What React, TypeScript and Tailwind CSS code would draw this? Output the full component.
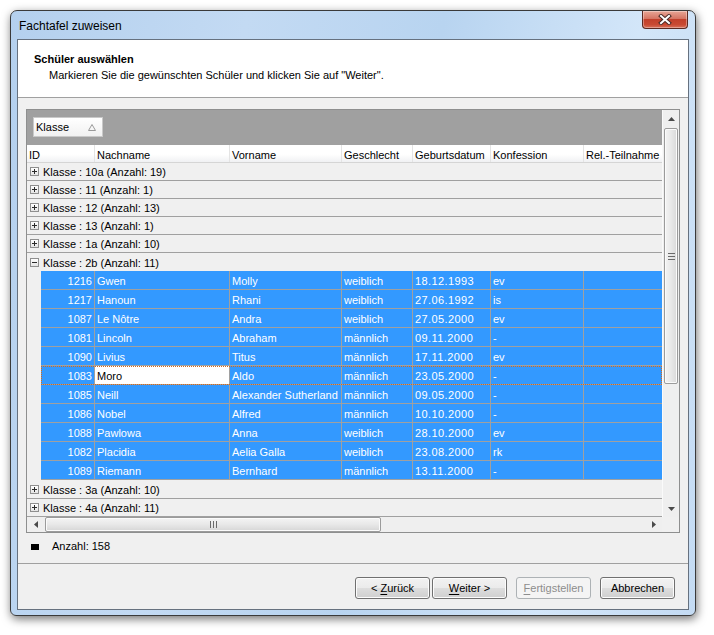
import React from "react";

type Row = [string, string, string, string, string, string];

const rows: Row[] = [
  ["1216", "Gwen", "Molly", "weiblich", "18.12.1993", "ev"],
  ["1217", "Hanoun", "Rhani", "weiblich", "27.06.1992", "is"],
  ["1087", "Le Nôtre", "Andra", "weiblich", "27.05.2000", "ev"],
  ["1081", "Lincoln", "Abraham", "männlich", "09.11.2000", "-"],
  ["1090", "Livius", "Titus", "männlich", "17.11.2000", "ev"],
  ["1083", "Moro", "Aldo", "männlich", "23.05.2000", "-"],
  ["1085", "Neill", "Alexander Sutherland", "männlich", "09.05.2000", "-"],
  ["1086", "Nobel", "Alfred", "männlich", "10.10.2000", "-"],
  ["1088", "Pawlowa", "Anna", "weiblich", "28.10.2000", "ev"],
  ["1082", "Placidia", "Aelia Galla", "weiblich", "23.08.2000", "rk"],
  ["1089", "Riemann", "Bernhard", "männlich", "13.11.2000", "-"],
];

const colW = ["w-[135px]", "w-[112px]", "w-[71px]", "w-[78px]", "w-[93px]", "w-[78px]"];
const headers = ["Nachname", "Vorname", "Geschlecht", "Geburtsdatum", "Konfession", "Rel.-Teilnahme"];

function PlusBox({ minus }: { minus?: boolean }) {
  return (
    <div className="w-[9px] h-[9px] border border-[#8f8f8f] bg-[linear-gradient(#ffffff,#e4e4e4)] flex items-center justify-center shrink-0">
      <svg width="5" height="5" viewBox="0 0 5 5">
        <rect x="0" y="2" width="5" height="1" fill="#2a2a2a" />
        {!minus && <rect x="2" y="0" width="1" height="5" fill="#2a2a2a" />}
      </svg>
    </div>
  );
}

function GroupRow({ label, minus, noBorder }: { label: string; minus?: boolean; noBorder?: boolean }) {
  return (
    <div
      className={
        noBorder
          ? "h-[18px] flex items-center pl-[3px] gap-[4px] bg-[#f0f0f0]"
          : "h-[18px] flex items-center pl-[3px] gap-[4px] bg-[#f0f0f0] border-b border-[#a0a0a0]"
      }
    >
      <PlusBox minus={minus} />
      <span className="leading-none pt-[2px]">Klasse : {label}</span>
    </div>
  );
}

function DataRow({ r, focused }: { r: Row; focused?: boolean }) {
  return (
    <div
      className={
        focused
          ? "flex h-[19px] border-b border-[#a0a0a0] bg-[#3399ff] text-white outline-1 outline-dotted outline-[#d2691e] -outline-offset-1"
          : "flex h-[19px] border-b border-[#a0a0a0] bg-[#3399ff] text-white"
      }
    >
      <div className="w-[54px] border-r border-[#a0a0a0] flex items-center justify-end pr-[2px] pt-[2px]">{r[0]}</div>
      {r.slice(1).map((v, i) => (
        <div
          key={i}
          className={
            (i === 0 && focused ? "bg-white text-black " : "") +
            (i === 3 ? "tracking-[0.4px] " : "") +
            colW[i] +
            (i < 5 ? " border-r border-[#a0a0a0]" : "") +
            " flex items-center pl-[2px] pt-[2px] whitespace-nowrap overflow-hidden"
          }
        >
          {v}
        </div>
      ))}
    </div>
  );
}

function Btn({ children, disabled }: { children: React.ReactNode; disabled?: boolean }) {
  return (
    <div
      className={
        disabled
          ? "w-[75px] h-[22px] rounded-[3px] border border-[#adb2b5] bg-[#f4f4f4] text-[#8d8d8d] flex items-center justify-center"
          : "w-[75px] h-[22px] rounded-[3px] border border-[#707070] bg-[linear-gradient(#f2f2f2,#ebebeb_48%,#dddddd_52%,#cfcfcf)] text-black flex items-center justify-center shadow-[inset_0_0_0_1px_#fcfcfc]"
      }
    >
      {children}
    </div>
  );
}

export default function App() {
  return (
    <div className="w-[714px] h-[635px] bg-white pt-[10px] pl-[10px] font-['Liberation_Sans',Arial,sans-serif] text-[11px] text-black">
      <div className="w-[686px] h-[606px] border border-[#3a3a3a] rounded-t-[7px] rounded-b-[6px] flex flex-col bg-[linear-gradient(100deg,#b4d0ee,#c3daf3_30%,#b8d4f0_55%,#d3e6f9_80%,#c4dbf3)] shadow-[1px_3px_10px_rgba(0,0,0,0.55)]">
        {/* title bar */}
        <div className="h-[28px] flex pl-[8px] pr-[7px]">
          <div className="self-center text-[12px] pt-[1px] text-black">Fachtafel zuweisen</div>
          <div className="ml-auto w-[46px] h-[18px] rounded-b-[4px] border border-t-0 border-[#5b2a22] bg-[linear-gradient(#e8a696,#d57563_45%,#c2402b_50%,#c94a33_80%,#d8705a)] flex items-center justify-center shadow-[inset_0_0_0_1px_rgba(255,255,255,0.35)]">
            <svg width="14" height="11" viewBox="0 0 14 11">
              <path d="M3 2 L11 9 M11 2 L3 9" stroke="#4a2a26" strokeWidth="4" strokeLinecap="square" />
              <path d="M3 2 L11 9 M11 2 L3 9" stroke="#ffffff" strokeWidth="2" strokeLinecap="square" />
            </svg>
          </div>
        </div>
        {/* client */}
        <div className="mx-[6px] h-[571px] border border-[#66717f] bg-[#f0f0f0] flex flex-col">
          <div className="h-[58px] bg-white border-b border-[#a0a0a0] flex flex-col pl-[16px] pt-[13px] shrink-0">
            <div className="font-bold leading-[13px]">Schüler auswählen</div>
            <div className="leading-[13px] mt-[3px] pl-[15px]">
              Markieren Sie die gewünschten Schüler und klicken Sie auf "Weiter".
            </div>
          </div>

          {/* grid */}
          <div className="mt-[11px] ml-[8px] w-[654px] h-[424px] border border-[#8e8f8f] flex flex-col shrink-0">
            <div className="flex h-[407px]">
              <div className="w-[635px] flex flex-col">
                <div className="h-[35px] bg-[#a0a0a0] pt-[7px] pl-[6px] shrink-0">
                  <div className="w-[70px] h-[20px] bg-[linear-gradient(#ffffff,#f1f1f1)] border border-[#c9c9c9] flex items-center pl-[2px] pr-[6px] pt-[1px]">
                    <span>Klasse</span>
                    <svg className="ml-auto" width="8" height="7" viewBox="0 0 8 7">
                      <polygon points="0.5,6.5 4,0.5 7.5,6.5" fill="none" stroke="#9a9a9a" strokeWidth="1" />
                    </svg>
                  </div>
                </div>
                <div className="h-[18px] flex border-b border-[#d5d5d5] bg-[linear-gradient(#ffffff,#ffffff_55%,#f0f1f3)] shrink-0">
                  <div className="w-[68px] border-r border-[#e4e4e4] flex items-center pl-[2px] pt-[3px]">ID</div>
                  {headers.map((h, i) => (
                    <div
                      key={h}
                      className={colW[i] + (i < 5 ? " border-r border-[#e4e4e4]" : "") + " flex items-center pl-[2px] pt-[3px] whitespace-nowrap"}
                    >
                      {h}
                    </div>
                  ))}
                </div>
                <GroupRow label="10a (Anzahl: 19)" />
                <GroupRow label="11 (Anzahl: 1)" />
                <GroupRow label="12 (Anzahl: 13)" />
                <GroupRow label="13 (Anzahl: 1)" />
                <GroupRow label="1a (Anzahl: 10)" />
                <GroupRow label="2b (Anzahl: 11)" minus noBorder />
                <div className="flex bg-[#f0f0f0] pb-[1px]">
                  <div className="w-[14px] shrink-0" />
                  <div className="flex-1 flex flex-col">
                    {rows.map((r, i) => (
                      <DataRow key={r[0]} r={r} focused={i === 5} />
                    ))}
                  </div>
                </div>
                <GroupRow label="3a (Anzahl: 10)" />
                <GroupRow label="4a (Anzahl: 11)" />
              </div>
              {/* vertical scrollbar */}
              <div className="w-[17px] bg-[#efefef] border-l border-[#fafafa] flex flex-col">
                <div className="h-[17px] flex items-center justify-center">
                  <svg width="7" height="4" viewBox="0 0 7 4">
                    <polygon points="0,4 3.5,0 7,4" fill="#4a4a4a" />
                  </svg>
                </div>
                <div className="mt-[1px] h-[256px] mx-[1px] rounded-[2px] border border-[#9b9b9b] bg-[linear-gradient(90deg,#f4f4f4,#e8e8e8_50%,#d9d9d9)] shadow-[inset_0_0_0_1px_#fbfbfb] flex items-center justify-center">
                  <svg width="7" height="7" viewBox="0 0 7 7">
                    <rect x="0" y="0" width="7" height="1" fill="#6a6a6a" />
                    <rect x="0" y="3" width="7" height="1" fill="#6a6a6a" />
                    <rect x="0" y="6" width="7" height="1" fill="#6a6a6a" />
                  </svg>
                </div>
                <div className="mt-auto h-[17px] flex items-center justify-center">
                  <svg width="7" height="4" viewBox="0 0 7 4">
                    <polygon points="0,0 3.5,4 7,0" fill="#4a4a4a" />
                  </svg>
                </div>
              </div>
            </div>
            {/* horizontal scrollbar */}
            <div className="flex h-[15px]">
              <div className="w-[635px] bg-[#efefef] flex items-stretch">
                <div className="w-[17px] flex items-center justify-center">
                  <svg width="4" height="7" viewBox="0 0 4 7">
                    <polygon points="4,0 0,3.5 4,7" fill="#4a4a4a" />
                  </svg>
                </div>
                <div className="ml-[1px] w-[336px] rounded-[2px] border border-[#9b9b9b] bg-[linear-gradient(#f4f4f4,#e8e8e8_50%,#d6d6d6)] shadow-[inset_0_0_0_1px_#fbfbfb] flex items-center justify-center">
                  <svg width="7" height="7" viewBox="0 0 7 7">
                    <rect x="0" y="0" width="1" height="7" fill="#6a6a6a" />
                    <rect x="3" y="0" width="1" height="7" fill="#6a6a6a" />
                    <rect x="6" y="0" width="1" height="7" fill="#6a6a6a" />
                  </svg>
                </div>
                <div className="ml-auto w-[17px] flex items-center justify-center">
                  <svg width="4" height="7" viewBox="0 0 4 7">
                    <polygon points="0,0 4,3.5 0,7" fill="#4a4a4a" />
                  </svg>
                </div>
              </div>
              <div className="w-[17px] bg-[#f0f0f0]" />
            </div>
          </div>

          {/* count */}
          <div className="mt-[7px] h-[13px] flex items-center pl-[13px] shrink-0">
            <div className="w-[8px] h-[6px] bg-black" />
            <span className="ml-[13px] leading-[13px]">Anzahl: 158</span>
          </div>

          <div className="mt-[10px] border-t border-[#a0a0a0] shrink-0" />

          <div className="mt-[13px] flex justify-end pr-[13px] shrink-0">
            <Btn>
              &lt;&nbsp;<span className="underline underline-offset-2">Z</span>urück
            </Btn>
            <div className="w-[2px]" />
            <Btn>
              <span className="underline underline-offset-2">W</span>eiter &gt;
            </Btn>
            <div className="w-[9px]" />
            <Btn disabled>
              <span className="underline underline-offset-2">F</span>ertigstellen
            </Btn>
            <div className="w-[9px]" />
            <Btn>Abbrechen</Btn>
          </div>
        </div>
      </div>
    </div>
  );
}
